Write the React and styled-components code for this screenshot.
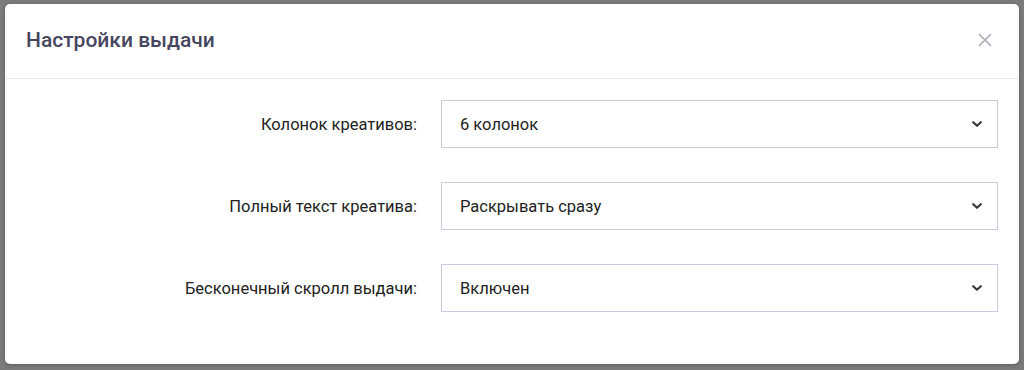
import React from 'react';
import styled, { createGlobalStyle } from 'styled-components';

const GlobalStyle = createGlobalStyle`
    html, body {
        margin: 0;
        padding: 0;
        font-family: Roboto, "Liberation Sans", sans-serif;
    }
`;

const Backdrop = styled.div`
    width: 1024px;
    height: 370px;
    box-sizing: border-box;
    background: #7b7b7b;
    padding: 4px 5px 6px 5px;
    overflow: hidden;
`;

const Modal = styled.div`
    height: 100%;
    background: #fff;
    border-radius: 5px;
    display: flex;
    flex-direction: column;
    box-shadow: 0 1px 4px rgba(0, 0, 0, 0.25);
`;

const Header = styled.div`
    height: 75px;
    box-sizing: border-box;
    display: flex;
    align-items: center;
    justify-content: space-between;
    padding: 0 26px 2px 21px;
    border-bottom: 1px solid #e8eaf1;
`;

const Title = styled.h2`
    margin: 0;
    font-size: 21px;
    font-weight: 500;
    color: #474660;
`;

const Close = styled.button`
    border: none;
    background: none;
    padding: 0;
    width: 16px;
    height: 16px;
    cursor: pointer;
    display: flex;
`;

const Body = styled.div`
    padding: 21px 21px 0 0;
    display: flex;
    flex-direction: column;
    gap: 34px;
`;

const Row = styled.div`
    display: grid;
    grid-template-columns: 412px 1fr;
    column-gap: 24px;
    align-items: center;
`;

const Label = styled.label`
    text-align: right;
    font-size: 16.5px;
    color: #222;
`;

const Select = styled.div`
    height: 48px;
    box-sizing: border-box;
    border: 1px solid #c7cde0;
    display: flex;
    align-items: center;
    justify-content: space-between;
    padding: 0 14px 0 18px;
    font-size: 16.5px;
    color: #222;
`;

const Chevron = () => (
    <svg width="12" height="8" viewBox="0 0 12 8">
        <path d="M2.2 2.2l3.8 3.6 3.8-3.6" fill="none" stroke="#3a3a3a" strokeWidth="2.2" strokeLinecap="round" strokeLinejoin="round" />
    </svg>
);

const settings = [
    { label: 'Колонок креативов:', value: '6 колонок' },
    { label: 'Полный текст креатива:', value: 'Раскрывать сразу' },
    { label: 'Бесконечный скролл выдачи:', value: 'Включен' },
];

function App() {
    return (
        <>
            <GlobalStyle />
            <Backdrop>
                <Modal>
                    <Header>
                        <Title>Настройки выдачи</Title>
                        <Close aria-label="Закрыть">
                            <svg width="16" height="16" viewBox="0 0 16 16">
                                <path d="M2 2l12 12M14 2L2 14" stroke="#a9abb6" strokeWidth="1.6" />
                            </svg>
                        </Close>
                    </Header>
                    <Body>
                        {settings.map((s) => (
                            <Row key={s.label}>
                                <Label>{s.label}</Label>
                                <Select>
                                    <span>{s.value}</span>
                                    <Chevron />
                                </Select>
                            </Row>
                        ))}
                    </Body>
                </Modal>
            </Backdrop>
        </>
    );
}

export default App;
